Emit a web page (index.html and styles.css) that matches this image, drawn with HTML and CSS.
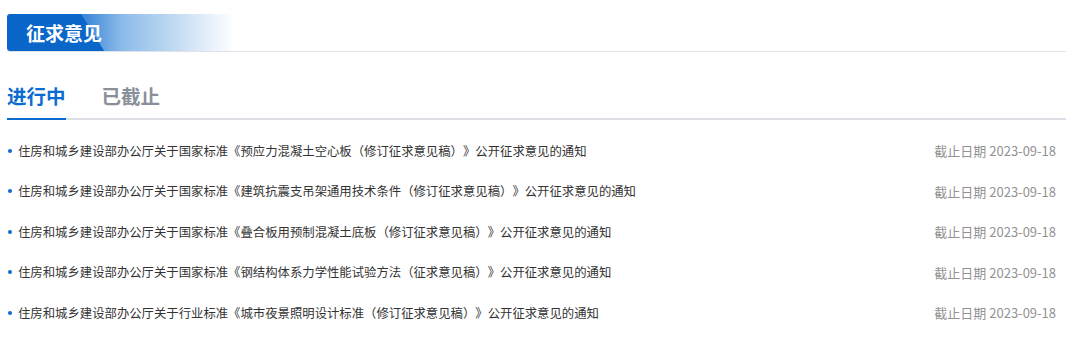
FILE: index.html
```html
<!DOCTYPE html>
<html lang="zh-CN">
<head>
<meta charset="utf-8">
<title>征求意见</title>
<link rel="stylesheet" href="styles.css">
</head>
<body>
<div class="page">
  <div class="head">
    <div class="title-box"><span class="title">征求意见</span></div>
  </div>
  <div class="tabs">
    <div class="tab active">进行中</div>
    <div class="tab">已截止</div>
  </div>
  <ul class="list">
    <li class="row"><span class="dot"></span><span class="name">住房和城乡建设部办公厅关于国家标准《预应力混凝土空心板（修订征求意见稿）》公开征求意见的通知</span><span class="date">截止日期 2023-09-18</span></li>
    <li class="row"><span class="dot"></span><span class="name">住房和城乡建设部办公厅关于国家标准《建筑抗震支吊架通用技术条件（修订征求意见稿）》公开征求意见的通知</span><span class="date">截止日期 2023-09-18</span></li>
    <li class="row"><span class="dot"></span><span class="name">住房和城乡建设部办公厅关于国家标准《叠合板用预制混凝土底板（修订征求意见稿）》公开征求意见的通知</span><span class="date">截止日期 2023-09-18</span></li>
    <li class="row"><span class="dot"></span><span class="name">住房和城乡建设部办公厅关于国家标准《钢结构体系力学性能试验方法（征求意见稿）》公开征求意见的通知</span><span class="date">截止日期 2023-09-18</span></li>
    <li class="row"><span class="dot"></span><span class="name">住房和城乡建设部办公厅关于行业标准《城市夜景照明设计标准（修订征求意见稿）》公开征求意见的通知</span><span class="date">截止日期 2023-09-18</span></li>
  </ul>
</div>
</body>
</html>
```
FILE: styles.css
```css
html, body {
  margin: 0;
  padding: 0;
  background: #ffffff;
}
body {
  font-family: "Noto Sans CJK SC", "Noto Sans", sans-serif;
  color: #333333;
}
.page {
  padding: 14px 14px 0 7px;
}
.head {
  display: flex;
  border-bottom: 1px solid #dfe2ea;
}
.title-box {
  width: 228px;
  height: 37px;
  border-radius: 3px 0 0 3px;
  display: flex;
  align-items: center;
  background:
    linear-gradient(58deg, #0a66c9 0, #0a66c9 82px, rgba(10,102,201,0) 83px),
    linear-gradient(90deg, #1f74d0 0, #3f8ad8 80px, #8cbbe9 115px, #c4dcf3 170px, #eef5fc 210px, #ffffff 228px);
}
.title {
  margin-left: 19px;
  font-size: 19px;
  font-weight: 700;
  color: #ffffff;
}
.tabs {
  display: flex;
  gap: 36px;
  margin-top: 30px;
  border-bottom: 2px solid #dcdfe5;
}
.tab {
  font-size: 19.5px;
  font-weight: 700;
  line-height: 28px;
  padding-bottom: 8px;
  color: #8a9099;
  margin-bottom: -2px;
  border-bottom: 2px solid transparent;
}
.tab.active {
  color: #0b6bd0;
  border-bottom-color: #0b6bd0;
}
.list {
  list-style: none;
  margin: 0;
  padding: 10.5px 10px 0 0;
}
.row {
  display: flex;
  align-items: center;
  height: 40.5px;
}
.dot {
  width: 4px;
  height: 4px;
  border-radius: 50%;
  background: #0b6bd0;
  margin-left: 0.5px;
  margin-right: 6.5px;
  flex: none;
}
.name {
  flex: 1;
  font-size: 12.37px;
  color: #333333;
  white-space: nowrap;
  text-spacing-trim: space-all;
}
.date {
  font-size: 13px;
  color: #929292;
  white-space: nowrap;
}
```
